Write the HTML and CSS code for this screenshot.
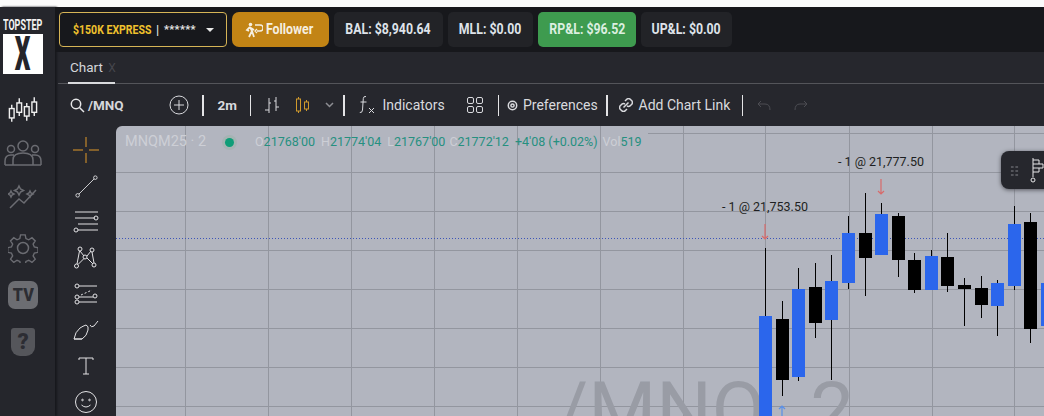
FILE: index.html
```html
<!DOCTYPE html>
<html lang="en">
<head>
<meta charset="utf-8">
<title>Topstep X Chart</title>
<link rel="stylesheet" href="styles.css">
</head>
<body>
<div class="strip"></div>
<div class="app">
  <aside class="side">
    <div class="logo">
      <div class="logo-top"><span>TOPSTEP</span></div>
      <div class="logo-x"><span>X</span></div>
    </div>
    <nav class="side-nav">
      <svg class="nav-ico bright" width="30" height="27" viewBox="0 0 32 28"><path d="M4 9v4M4 23v4M12 2v5M12 17v4M20 7v4M20 21v5M28 1v5M28 17v4"/><rect x="1.500" y="13" width="5" height="10"/><rect x="9.500" y="7" width="5" height="10"/><rect x="17.500" y="11" width="5" height="10"/><rect x="25.500" y="6" width="5" height="11"/></svg>
      <svg class="nav-ico dim n-people" width="38" height="26" viewBox="0 0 38 26"><circle cx="19" cy="6" r="5"/><circle cx="7" cy="9" r="3.500"/><circle cx="31" cy="9" r="3.500"/><path d="M9 25v-5q0-7 10-7t10 7v5M1 25v-4q0-6 6-6h3M37 25v-4q0-6-6-6h-3M1 25h36"/></svg>
      <svg class="nav-ico dim n-spark" width="30" height="26" viewBox="0 0 30 26"><path d="M2 25l9-9 5 4 12-13"/><path d="M11 3l1.500 3 3 1.500-3 1.500-1.500 3-1.500-3-3-1.500 3-1.500zM22 8l1 2 2 1-2 1-1 2-1-2-2-1 2-1zM3 8l1 2 2 1-2 1-1 2-1-2-2-1 2-1z"/></svg>
      <svg class="nav-ico dim n-gear" width="30" height="30" viewBox="0 0 30 30"><circle cx="15" cy="15" r="5.500"/><path d="M12.500 1h5l.8 4 3 1.300 3.500-2.300 3.500 3.500-2.300 3.500 1.300 3 4 .8v5l-4 .8-1.300 3 2.300 3.500-3.500 3.500-3.500-2.300-3 1.300-.8 4h-5l-.8-4-3-1.300-3.500 2.300-3.500-3.500 2.300-3.500-1.300-3-4-.8v-5l4-.8 1.300-3-2.300-3.500 3.500-3.500 3.500 2.300 3-1.300z" transform="scale(.93) translate(1 1)"/></svg>
      <div class="tv"><span>TV</span></div>
      <div class="help">?</div>
    </nav>
  </aside>

  <div class="main">
    <header class="top">
      <div class="account"><span class="acc-name"><span class="cond-acc">$150K EXPRESS</span></span><span class="acc-sep">|</span><span class="acc-mask">******</span><span class="caret"></span></div>
      <div class="follower">
        <svg width="18" height="16" viewBox="0 0 18 16"><circle cx="5.500" cy="2.500" r="1.800" class="fill"/><path d="M5 5l-3 3 2 1M5 5l2 4-3 6M7 9l2 6M6 6l3 2" class="run"/><path d="M10 3h5a3 3 0 0 1 0 6h-3M12 7l-2 2 2 2" class="run thin"/></svg>
        <span class="cond">Follower</span>
      </div>
      <div class="stat stat-bal"><span class="cond-c">BAL: $8,940.64</span></div>
      <div class="stat stat-mll"><span class="cond-c">MLL: $0.00</span></div>
      <div class="stat stat-rpl"><span class="cond-c">RP&amp;L: $96.52</span></div>
      <div class="stat stat-upl"><span class="cond-c">UP&amp;L: $0.00</span></div>
    </header>

    <div class="panel">
      <div class="tabs">
        <div class="tab">Chart <span class="tab-x">X</span></div>
      </div>
      <div class="tools">
        <svg class="search" width="15" height="15" viewBox="0 0 15 15"><circle cx="6" cy="6" r="4.700"/><path d="M9.500 9.500l4.500 4.500"/></svg>
        <span class="symbol">/MNQ</span>
        <svg class="t-plus ico" width="20" height="20" viewBox="0 0 20 20"><circle cx="10" cy="10" r="9"/><path d="M10 5v10M5 10h10"/></svg>
        <i class="sep s-a"></i>
        <span class="interval">2m</span>
        <i class="sep s-b"></i>
        <svg class="t-bars ico" width="16" height="18" viewBox="0 0 16 18"><path d="M5 2v15M1 14h4M5 7h2M12 1v14M10 5h2M12 11h3"/></svg>
        <svg class="t-candle" width="15" height="18" viewBox="0 0 15 18"><path d="M3.500 1v2M3.500 15v2M11.500 4v2M11.500 13v2"/><rect x="1.500" y="3" width="4" height="12"/><rect x="9.500" y="6" width="4" height="7"/></svg>
        <svg class="t-chev" width="9" height="6" viewBox="0 0 9 6"><path d="M1 1l3.500 3.500L8 1"/></svg>
        <i class="sep s-c"></i>
        <svg class="t-fx ico" width="16" height="20" viewBox="0 0 16 20"><path d="M7 1.500q-2.500-.5-2.700 2L3.500 15q-.2 3-2.700 2.500M1.500 7h6M10 13l5 5M15 13l-5 5"/></svg>
        <span class="label l-ind">Indicators</span>
        <svg class="t-grid ico" width="16" height="16" viewBox="0 0 16 16"><rect x=".5" y=".5" width="6" height="6" rx="1.500"/><rect x="9.500" y=".5" width="6" height="6" rx="1.500"/><rect x=".5" y="9.500" width="6" height="6" rx="1.500"/><rect x="9.500" y="9.500" width="6" height="6" rx="1.500"/></svg>
        <i class="sep s-d"></i>
        <svg class="t-gear" width="11" height="11" viewBox="0 0 11 11"><circle cx="5.500" cy="5.500" r="1.600"/><circle cx="5.500" cy="5.500" r="4.200"/></svg>
        <span class="label l-pref">Preferences</span>
        <i class="sep s-e"></i>
        <svg class="t-link" width="14" height="14" viewBox="0 0 14 14"><path d="M6 3l2-2q1.500-.8 3 0l2 2q.8 1.500 0 3l-2 2q-1.500.8-3 0M8 11l-2 2q-1.500.8-3 0l-2-2q-.8-1.500 0-3l2-2q1.500-.8 3 0M4.500 9.500l5-5"/></svg>
        <span class="label l-link">Add Chart Link</span>
        <i class="sep s-f"></i>
        <svg class="t-undo ico-off" width="14" height="11" viewBox="0 0 14 11"><path d="M4 1L1 4l3 3M1 4h7q5 0 5 6"/></svg>
        <svg class="t-redo ico-off" width="14" height="11" viewBox="0 0 14 11"><path d="M10 1l3 3-3 3M13 4H6q-5 0-5 6"/></svg>
      </div>
      <div class="work">
        <div class="draw">
          <svg class="d-ico orange" width="26" height="26" viewBox="0 0 26 26"><path d="M0 13h10M16 13h10M13 0v10M13 16v10"/></svg>
          <svg class="d-ico" width="23" height="23" viewBox="0 0 26 26"><circle cx="3" cy="23" r="2"/><circle cx="23" cy="3" r="2"/><path d="M4.500 21.500l17-17"/></svg>
          <svg class="d-ico" width="26" height="22" viewBox="0 0 26 22"><path d="M2 1h23M2 7h20M5 13h20M5 19h20"/><circle cx="23" cy="7" r="2"/><circle cx="3" cy="19" r="2"/></svg>
          <svg class="d-ico" width="24" height="24" viewBox="0 0 24 24"><circle cx="6" cy="3" r="2"/><circle cx="18" cy="4" r="2"/><circle cx="11" cy="11" r="2"/><circle cx="2.500" cy="20" r="2"/><circle cx="20" cy="19" r="2"/><path d="M6 5l4 5M17 5l-4 5M5.500 5L3 18M18 6l2 11M4 18.500l6-6M13 12l6 6"/></svg>
          <svg class="d-ico" width="24" height="22" viewBox="0 0 24 22"><circle cx="3" cy="3" r="2"/><circle cx="3" cy="14" r="2"/><circle cx="3" cy="19" r="2"/><circle cx="21" cy="13" r="2"/><path d="M5 3h18M5 19h18M5 14h14"/><path d="M7 12l11-5" stroke-dasharray="2 2"/></svg>
          <svg class="d-ico" width="26" height="22" viewBox="0 0 26 22"><path d="M1 20q1-7 6-11 3-2 6-3 3 1 2 5-1 6-6 9zM1 20h8M17 6q1 3 4 1l4-5"/></svg>
          <svg class="d-ico" width="16" height="18" viewBox="0 0 16 18"><path d="M1 3V1h14v2M8 1v16M5 17h6"/></svg>
          <svg class="d-ico" width="24" height="24" viewBox="0 0 24 24"><circle cx="12" cy="12" r="10.500"/><circle cx="8.500" cy="10" r=".8"/><circle cx="15.500" cy="10" r=".8"/><path d="M7.500 15q4.500 4 9 0"/></svg>
        </div>
        <div class="chart">
          <svg class="plot" width="928" height="290" viewBox="116 126 928 290">
            <g class="grid">
              <path d="M185.500 126v290M268.500 126v290M351.500 126v290M434.500 126v290M517.500 126v290M600.500 126v290M683.500 126v290M765.500 126v290M849.500 126v290M932.500 126v290M1014.500 126v290"/>
              <path d="M116 172.500h928M116 211.500h928M116 250.500h928M116 289.500h928M116 328.500h928M116 367.500h928M116 406.500h928M648 133.500h396"/>
            </g>
            <text class="mark" x="556" y="437">/MNQ, 2</text>
            <path class="price" d="M116 238.500h928"/>
            <g class="wick-k">
              <path d="M765.500 248v70M782.500 301v95M798.500 268v113M815.500 263v75M831.500 255v125M848.500 216v73M865.500 193v103M881.500 203v12M898.500 213v64M914.500 253v40M931.500 250v8M947.500 233v59M964.500 278v48M981.500 276v42M997.500 280v56M1014.500 206v84M1030.500 213v130"/>
            </g>
            <g class="up">
              <rect x="759" y="316" width="13" height="100"/>
              <rect x="792" y="289" width="13" height="88"/>
              <rect x="825" y="281" width="13" height="39"/>
              <rect x="842" y="233" width="13" height="50"/>
              <rect x="875" y="214" width="13" height="41"/>
              <rect x="925" y="256" width="13" height="34"/>
              <rect x="991" y="283" width="13" height="23"/>
              <rect x="1008" y="224" width="13" height="62"/>
              <rect x="1041" y="283" width="13" height="43"/>
            </g>
            <g class="down">
              <rect x="776" y="319" width="13" height="61"/>
              <rect x="809" y="287" width="13" height="36"/>
              <rect x="859" y="233" width="13" height="25"/>
              <rect x="892" y="216" width="13" height="44"/>
              <rect x="908" y="260" width="13" height="30"/>
              <rect x="941" y="257" width="13" height="29"/>
              <rect x="958" y="285" width="13" height="4"/>
              <rect x="975" y="288" width="13" height="17"/>
              <rect x="1024" y="222" width="13" height="107"/>
            </g>
            <path class="sell" d="M765 224v14M762 236l3 3 3-3M881 179v14M878 191l3 3 3-3"/>
            <path class="buy" d="M782 407v9M779 409l3-3 3 3"/>
            <text class="fill-note" x="722" y="211">- 1 @ 21,753.50</text>
            <text class="fill-note" x="838" y="166">- 1 @ 21,777.50</text>
          </svg>
          <div class="legend">
            <span class="leg-name">MNQM25 · 2</span>
            <span class="leg-dot"></span>
            <span class="leg-o"><b>O</b>21768'00</span>
            <span class="leg-h"><b>H</b>21774'04</span>
            <span class="leg-l"><b>L</b>21767'00</span>
            <span class="leg-c"><b>C</b>21772'12</span>
            <span class="leg-d">+4'08 (+0.02%)</span>
            <span class="leg-v"><b>Vol</b>519</span>
          </div>
          <div class="float">
            <span class="grip"></span>
            <svg width="14" height="26" viewBox="0 0 14 26"><path d="M3 1v19M3 3h6v4h4v4H3M3 7h6M3 15h6v-4"/><circle cx="3" cy="23" r="2"/></svg>
          </div>
        </div>
      </div>
    </div>
  </div>
</div>
</body>
</html>
```
FILE: styles.css
```css
* { box-sizing: border-box; }
html, body { margin: 0; padding: 0; }
body {
  width: 1044px;
  height: 416px;
  overflow: hidden;
  background: #22232a;
  font-family: Roboto, "Liberation Sans", sans-serif;
  color: #e4e5e8;
}
.strip { height: 7px; background: #fbfbfb; }
.app { display: flex; height: 409px; }

/* left rail */
.side {
  width: 55px;
  flex: none;
  background: #25262c;
  box-shadow: 2px 0 2px #17181c;
  position: relative;
  z-index: 2;
}
.logo { width: 40px; margin: 12px 0 0 3px; }
.logo-top {
  font: bold 14px/13px Roboto, sans-serif;
  color: #f2f2f2;
  white-space: nowrap;
}
.logo-top span { display: inline-block; transform: scaleX(.64); transform-origin: left; }
.logo-x {
  height: 40px;
  margin-top: 2px;
  background: #fff;
  color: #24252b;
  font: 900 49px/40px Roboto, sans-serif;
  text-align: center;
  overflow: hidden;
}
.logo-x span { display: inline-block; transform: scaleX(.5); }
.side-nav {
  display: flex;
  flex-direction: column;
  align-items: center;
  width: 46px;
  margin-top: 22px;
}
.nav-ico { fill: none; stroke-width: 1.500; display: block; flex: none; }
.bright { stroke: #f0f0f0; }
.dim { stroke: #6b6c72; }
.n-people { margin-top: 17px; }
.n-spark { margin-top: 17px; }
.n-gear { margin-top: 24px; }
.tv {
  width: 30px;
  height: 28px;
  margin-top: 18px;
  border-radius: 7px;
  background: #6c6d72;
  color: #2c2d33;
  font: 900 19px/28px Roboto, sans-serif;
  text-align: center;
}
.tv span { display: inline-block; transform: scaleX(.85); }
.help {
  width: 24px;
  height: 28px;
  margin-top: 19px;
  border-radius: 3px 3px 9px 9px;
  background: #55565b;
  color: #2c2d33;
  font: 900 22px/27px Roboto, sans-serif;
  text-align: center;
}

/* main column */
.main { flex: 1; min-width: 0; display: flex; flex-direction: column; }
.top {
  height: 45px;
  flex: none;
  background: #17181c;
  display: flex;
  align-items: center;
  padding: 0 0 0 4px;
  gap: 5px;
  font: bold 15px/1 Roboto, sans-serif;
}
.cond { display: inline-block; white-space: nowrap; transform: scaleX(.82); transform-origin: left; }
.cond-c { display: inline-block; white-space: nowrap; transform: scaleX(.82); }
.cond-acc { display: inline-block; white-space: nowrap; transform: scaleX(.78); transform-origin: left; }
.account {
  width: 168px;
  height: 35px;
  border: 1.500px solid #d6b456;
  border-radius: 4px;
  background: #17181c;
  display: flex;
  align-items: center;
  padding-left: 13px;
  font-size: 13.500px;
}
.acc-name { color: #efc12d; width: 83px; flex: none; }
.acc-sep { color: #e8e8e8; width: 8px; flex: none; font-weight: normal; font-size: 13px; }
.acc-mask { color: #e8e8e8; width: 42px; flex: none; font-size: 11px; letter-spacing: .3px; }
.caret {
  flex: none;
  border: 4px solid transparent;
  border-top-color: #e8e8e8;
  border-bottom: 0;
}
.follower {
  width: 97px;
  height: 35px;
  border-radius: 7px;
  background: #c28415;
  color: #f6efe0;
  display: flex;
  align-items: center;
  padding-left: 13px;
  gap: 3px;
}
.follower svg { flex: none; }
.follower .fill { fill: #f6efe0; }
.follower .run { fill: none; stroke: #f6efe0; stroke-width: 1.800; }
.follower .thin { stroke-width: 1.300; }
.stat {
  height: 35px;
  border-radius: 5px;
  background: #222327;
  color: #dfe3ea;
  display: flex;
  align-items: center;
  justify-content: center;
}
.stat-bal { width: 109px; }
.stat-mll { width: 85px; }
.stat-rpl { width: 98px; background: #3e9b4f; color: #dcefe0; }
.stat-upl { width: 91px; }

.panel { flex: 1; min-height: 0; display: flex; flex-direction: column; background: #26272d; }
.tabs {
  height: 32px;
  flex: none;
  border-bottom: 1px solid #54555a;
  padding-left: 10px;
  margin-left: 3px;
  display: flex;
}
.tab {
  width: 47px;
  height: 32px;
  padding: 8px 0 0 2px;
  border-bottom: 2px solid #d9dadd;
  font-size: 13.500px;
  line-height: 15px;
  color: #d4d5d9;
  white-space: nowrap;
}
.tab-x { color: #45464c; font-size: 12px; margin-left: 2px; }

.tools {
  height: 42px;
  flex: none;
  display: flex;
  align-items: center;
  padding-left: 15px;
  color: #d9dade;
  font-size: 14px;
}
.tools svg { flex: none; fill: none; display: block; }
.search { stroke: #e6e6e8; stroke-width: 1.500; }
.symbol { margin-left: 3px; width: 40px; font-weight: 700; font-size: 13.500px; color: #d6d7db; }
.ico { stroke: #d9dade; stroke-width: 1; }
.ico-off { stroke: #4c4d53; stroke-width: 1; }
.sep { flex: none; width: 1.500px; height: 21px; background: #e4e4e6; }
.interval { margin-left: 14px; width: 20px; font-weight: 700; font-size: 13.500px; }
.label { white-space: nowrap; }
.t-plus { margin-left: 41px; }
.s-a { margin-left: 13px; }
.s-b { margin-left: 12px; }
.t-bars { margin-left: 13px; }
.t-candle { margin-left: 15px; stroke: #d09a2c; stroke-width: 1; }
.t-chev { margin-left: 15px; stroke: #8d8e93; stroke-width: 1.500; }
.s-c { margin-left: 9px; }
.t-fx { margin-left: 14px; }
.l-ind { margin-left: 8px; width: 62px; }
.t-grid { margin-left: 22px; }
.s-d { margin-left: 15px; }
.t-gear { margin-left: 8px; stroke: #d9dade; stroke-width: 1.500; }
.l-pref { margin-left: 5px; width: 74px; }
.s-e { margin-left: 9px; }
.t-link { margin-left: 11px; stroke: #d9dade; stroke-width: 1.500; }
.l-link { margin-left: 6px; width: 94px; }
.s-f { margin-left: 9px; }
.t-undo { margin-left: 14px; }
.t-redo { margin-left: 23px; }

.work { flex: 1; min-height: 0; display: flex; }
.draw {
  width: 58px;
  flex: none;
  margin-left: 3px;
  padding: 6px 2px 0 0;
  display: grid;
  grid-auto-rows: 36px;
  justify-items: center;
  align-items: center;
  align-content: start;
}
.d-ico { display: block; fill: none; stroke: #e2e2e4; stroke-width: 1; }
.orange { stroke: #e09a2a; }

/* chart canvas */
.chart {
  position: relative;
  width: 928px;
  height: 290px;
  flex: none;
  background: #b2b5bf;
  border-top-left-radius: 6px;
  overflow: hidden;
}
.plot { display: block; }
.grid path { fill: none; stroke: #93969f; stroke-width: 1; }
.price { fill: none; stroke: #3d55b8; stroke-width: 1; stroke-dasharray: 1 2; }
.mark { font: 400 78px Roboto, sans-serif; fill: #999ca5; word-spacing: 10px; }
.wick-k path { stroke: #000; stroke-width: 1; fill: none; }
.up rect { fill: #2b66ec; }
.down rect { fill: #000; }
.sell { fill: none; stroke: #d86a6a; stroke-width: 1.200; }
.buy { fill: none; stroke: #5a90e8; stroke-width: 1.200; }
.fill-note { font: 12.500px Roboto, sans-serif; fill: #1e1f22; }
.legend {
  position: absolute;
  left: 9px;
  top: 8px;
  display: flex;
  align-items: center;
  height: 16px;
  font-size: 12.500px;
  line-height: 16px;
  color: #26907f;
  white-space: nowrap;
}
.legend b { font-weight: 400; color: #cdcfd6; }
.leg-name { color: #cdcfd6; font-size: 14.500px; width: 100px; }
.leg-dot {
  width: 9px;
  height: 9px;
  border-radius: 50%;
  background: #0f9d78;
  box-shadow: 0 0 0 3px #a5b4b3;
}
.leg-o { margin-left: 21px; }
.leg-h, .leg-l { margin-left: 6px; }
.leg-c { margin-left: 4px; }
.leg-d { margin-left: 6px; }
.leg-v { margin-left: 5px; }
.float {
  position: absolute;
  left: 885px;
  top: 25px;
  width: 60px;
  height: 38px;
  border-radius: 8px;
  background: #26272d;
  box-shadow: 0 1px 4px #55565c;
  display: flex;
  align-items: center;
  padding-left: 9px;
  gap: 11px;
}
.grip {
  width: 9px;
  height: 11px;
  background: radial-gradient(circle, #54555b 1.200px, transparent 1.500px) 0 0 / 4.500px 4px;
}
.float svg { fill: none; stroke: #e6e6e8; stroke-width: 1; display: block; flex: none; }
```
